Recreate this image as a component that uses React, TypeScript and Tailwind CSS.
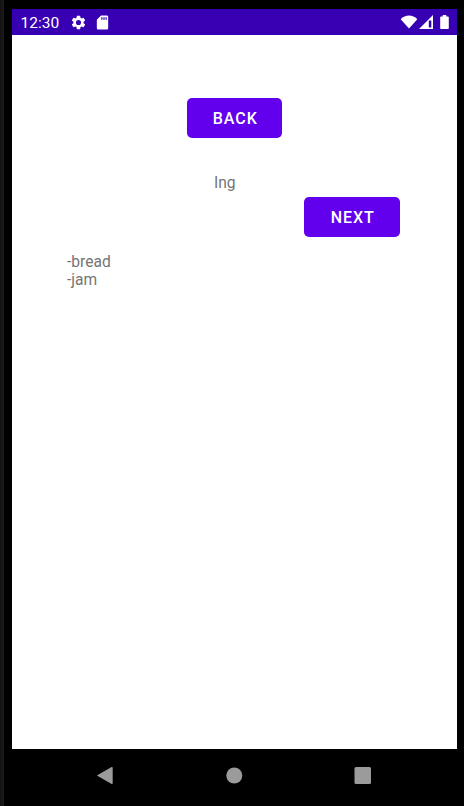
import React from 'react';

function StatusBar() {
  return (
    <div className="flex h-[26px] shrink-0 items-center bg-[#3700b3] pl-[9px] pr-[8px] text-white">
      <span className="w-[49px] pt-[2px] text-[15.5px] leading-[24px]">12:30</span>
      <svg className="block" width="17" height="17" viewBox="0 0 24 24" fill="currentColor">
        <path d="M19.14 12.94c.04-.3.06-.61.06-.94s-.02-.64-.07-.94l2.03-1.58c.18-.14.23-.41.12-.61l-1.92-3.32c-.12-.22-.37-.29-.59-.22l-2.39.96c-.5-.38-1.03-.7-1.62-.94L14.4 2.81c-.04-.24-.24-.41-.48-.41h-3.84c-.24 0-.43.17-.47.41l-.36 2.54c-.59.24-1.13.57-1.62.94l-2.39-.96c-.22-.08-.47 0-.59.22L2.74 8.87c-.12.21-.08.47.12.61l2.03 1.58c-.05.3-.09.63-.09.94s.02.64.07.94l-2.03 1.58c-.18.14-.23.41-.12.61l1.92 3.32c.12.22.37.29.59.22l2.39-.96c.5.38 1.03.7 1.62.94l.36 2.54c.05.24.24.41.48.41h3.84c.24 0 .44-.17.47-.41l.36-2.54c.59-.24 1.13-.56 1.62-.94l2.39.96c.22.08.47 0 .59-.22l1.92-3.32c.12-.22.07-.47-.12-.61l-2.01-1.58zM12 15.6A3.6 3.6 0 1 1 12 8.4a3.6 3.6 0 0 1 0 7.2z" />
      </svg>
      <svg className="ml-[7px] block" width="17" height="17" viewBox="0 0 24 24" fill="currentColor">
        <path d="M18 2h-8L4.02 8 4 20c0 1.1.9 2 2 2h12c1.1 0 2-.9 2-2V4c0-1.100-.9-2-2-2zm-6 6h-1.700V4.500H12V8zm3 0h-1.700V4.500H15V8zm3 0h-1.700V4.500H18V8z" />
      </svg>
      <div className="ml-auto flex items-center">
        <svg className="block" width="18" height="14" viewBox="0 0 18 14" fill="currentColor">
          <path d="M9 13.500.7 4.200C3 2 6 .6 9 .6s6 1.400 8.300 3.600z" />
        </svg>
        <svg className="block" width="16" height="16" viewBox="0 0 16 16">
          <path d="M1 15 15 1V15z" fill="currentColor" />
          <path d="M10.800 6.500h2.500v7h-2.500z" fill="#3700b3" />
        </svg>
        <svg className="ml-[6px] block" width="9" height="16" viewBox="0 0 9 16" fill="currentColor">
          <path d="M2.700 1h3.600v1.500h1.500c.6 0 1 .4 1 1V14c0 .6-.4 1-1 1H1.200c-.6 0-1-.4-1-1V3.500c0-.6.4-1 1-1h1.500z" />
        </svg>
      </div>
    </div>
  );
}

function ActionButton({ label }: { label: string }) {
  return (
    <button className="flex h-10 w-[95.5px] items-center justify-center rounded-[5px] bg-[#6200ee] pl-[2px] pt-[2px] text-[16px] font-medium leading-5 tracking-[1px] text-white">
      {label}
    </button>
  );
}

function NavigationBar() {
  return (
    <div className="flex h-[57px] shrink-0 items-start pl-[84px] pt-[17px] text-[#9b9b9b]">
      <svg className="block" width="18" height="20" viewBox="0 0 18 20" fill="currentColor">
        <path d="M1.300 9.200 15.600 1.100c.6-.3 1.100 0 1.100.6v15.600c0 .6-.5.9-1.100.6L1.300 9.800c-.3-.2-.3-.4 0-.6z" />
      </svg>
      <svg className="ml-[112px] block" width="18" height="20" viewBox="0 0 18 20" fill="currentColor">
        <circle cx="8.300" cy="9.500" r="8" />
      </svg>
      <svg className="ml-[110px] block" width="18" height="20" viewBox="0 0 18 20" fill="currentColor">
        <rect x=".5" y="1" width="16.500" height="17" rx="1.500" />
      </svg>
    </div>
  );
}

export default function App() {
  return (
    <div className="flex h-[806px] w-[464px] bg-black font-['Roboto',sans-serif]">
      <div className="w-[4px] bg-gradient-to-r from-[#111111] to-[#1b1b1b]" />
      <div className="ml-[7.5px] flex w-[445.5px] flex-col pt-[9px]">
        <StatusBar />
        <main className="flex h-[714px] shrink-0 flex-col bg-white text-[15.6px] leading-[18px] text-[#757575]">
          <div className="ml-[175px] mt-[62.5px]">
            <ActionButton label="BACK" />
          </div>
          <p className="ml-[202.5px] mt-[36.5px]">Ing</p>
          <div className="ml-[292.5px] mt-[4.6px]">
            <ActionButton label="NEXT" />
          </div>
          <p className="ml-[55.5px] mt-[16.4px]">
            -bread
            <br />
            -jam
          </p>
        </main>
        <NavigationBar />
      </div>
    </div>
  );
}
